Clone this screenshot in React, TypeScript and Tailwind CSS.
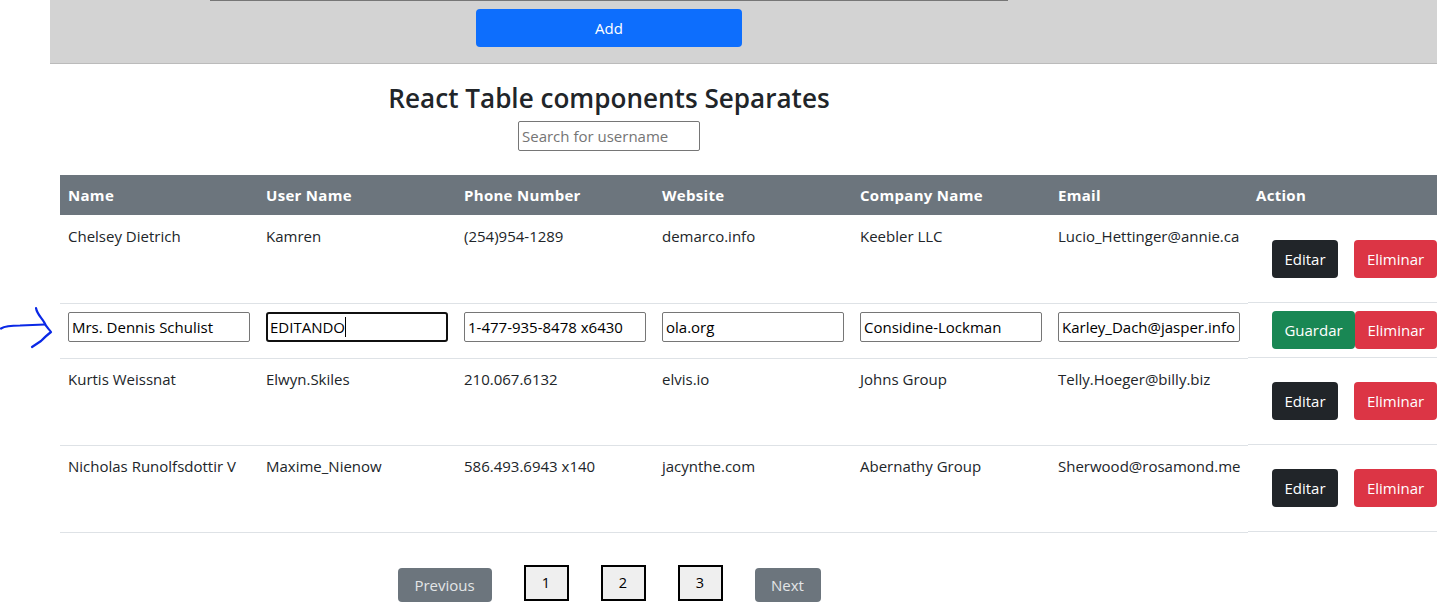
const rows = [
  { name: "Chelsey Dietrich", user: "Kamren", phone: "(254)954-1289", site: "demarco.info", company: "Keebler LLC", email: "Lucio_Hettinger@annie.ca" },
  { name: "Kurtis Weissnat", user: "Elwyn.Skiles", phone: "210.067.6132", site: "elvis.io", company: "Johns Group", email: "Telly.Hoeger@billy.biz" },
  { name: "Nicholas Runolfsdottir V", user: "Maxime_Nienow", phone: "586.493.6943 x140", site: "jacynthe.com", company: "Abernathy Group", email: "Sherwood@rosamond.me" },
]

const headers = ["Name", "User Name", "Phone Number", "Website", "Company Name", "Email", "Action"]

const inputClass =
  "w-[182px] h-[30px] border border-[#767676] rounded-[2px] px-[3px] text-[15px] text-black bg-white outline-none"

function TextRow({ row, height, actionHeight, top, actionTop }: { row: (typeof rows)[number]; height: string; actionHeight: string; top: string; actionTop: string }) {
  const cells = [row.name, row.user, row.phone, row.site, row.company, row.email]
  return (
    <div className="flex items-start">
      <div className={`flex w-[1188px] border-b border-[#dee2e6] px-0 ${height} ${top}`}>
        {cells.map((c) => (
          <div key={c} className="w-[198px] shrink-0 px-2 leading-[22px] whitespace-nowrap">
            {c}
          </div>
        ))}
      </div>
      <div className={`flex w-[189px] shrink-0 border-b border-[#dee2e6] pl-6 gap-4 ${actionHeight} ${actionTop}`}>
        <button className="h-[38px] w-[66px] rounded bg-[#212529] text-white">Editar</button>
        <button className="h-[38px] w-[83px] rounded bg-[#dc3545] text-white">Eliminar</button>
      </div>
    </div>
  )
}

export default function App() {
  return (
    <div className="w-[1437px] h-[612px] overflow-hidden bg-white pl-[50px] text-[15px] text-[#212529] font-['Open_Sans','Noto_Sans',sans-serif]">
      <div className="h-[64px] bg-[#d3d3d3] border-b border-[#bbbbbb]">
        <div className="w-[1118px] flex flex-col items-center">
          <div className="h-px w-[798px] bg-[#767676]" />
          <button className="mt-2 h-[38px] w-[266px] rounded bg-[#0d6efd] text-white">Add</button>
        </div>
      </div>

      <div className="w-[1118px] flex flex-col items-center">
        <h2 className="mt-[15px] h-[41px] text-[26.1px] leading-[38px] font-semibold whitespace-nowrap">React Table components Separates</h2>
        <input
          readOnly
          placeholder="Search for username"
          className="mt-[1px] h-[30px] w-[182px] border border-[#767676] rounded-[2px] px-[3px] text-[15px] placeholder:text-[#757575] outline-none"
        />
      </div>

      <div className="ml-[10px] mt-[24px] w-[1386px]">
        <div className="flex h-[40px] items-center bg-[#6c757d] text-white font-bold">
          {headers.map((h) => (
            <div key={h} className="w-[198px] shrink-0 px-2 tracking-[0.3px]">
              {h}
            </div>
          ))}
        </div>

        <TextRow row={rows[0]} height="h-[89px]" top="pt-[10px]" actionHeight="h-[88px]" actionTop="pt-[25px]" />

        <div className="flex items-start">
          <div className="flex h-[55px] w-[1188px] border-b border-[#dee2e6] pt-2">
            <div className="w-[198px] shrink-0 px-2"><input readOnly value="Mrs. Dennis Schulist" className={inputClass} /></div>
            <div className="w-[198px] shrink-0 px-2">
              <div className="flex h-[30px] w-[182px] items-center border-2 border-[#101010] rounded-[3px] px-[2px] text-black">
                EDITANDO<span className="h-[20px] w-px bg-black" />
              </div>
            </div>
            <div className="w-[198px] shrink-0 px-2"><input readOnly value="1-477-935-8478 x6430" className={inputClass} /></div>
            <div className="w-[198px] shrink-0 px-2"><input readOnly value="ola.org" className={inputClass} /></div>
            <div className="w-[198px] shrink-0 px-2"><input readOnly value="Considine-Lockman" className={inputClass} /></div>
            <div className="w-[198px] shrink-0 px-2"><input readOnly value="Karley_Dach@jasper.info" className={inputClass} /></div>
          </div>
          <div className="flex h-[54px] w-[189px] shrink-0 border-b border-[#dee2e6] pl-6 pt-[7px]">
            <button className="h-[38px] w-[83px] rounded bg-[#198754] text-white">Guardar</button>
            <button className="h-[38px] w-[82px] rounded bg-[#dc3545] text-white">Eliminar</button>
          </div>
        </div>

        <TextRow row={rows[1]} height="h-[87px]" top="pt-[9px]" actionHeight="h-[86px]" actionTop="pt-[23px]" />
        <TextRow row={rows[2]} height="h-[87px]" top="pt-[9px]" actionHeight="h-[86px]" actionTop="pt-[23px]" />
      </div>

      <div className="w-[1118px] mt-[32px] flex justify-center items-start gap-8">
        <button className="mt-[3px] h-[34px] w-[94px] rounded bg-[#6c757d] text-[#e3e5e7]">Previous</button>
        {[1, 2, 3].map((n) => (
          <button key={n} className="h-[36px] w-[45px] border-2 border-black bg-[#efefef] text-[14.5px] text-black">
            {n}
          </button>
        ))}
        <button className="mt-[3px] h-[34px] w-[66px] rounded bg-[#6c757d] text-[#e3e5e7]">Next</button>
      </div>

      {/* hand drawn arrow on the screenshot */}
      <svg className="absolute left-0 top-[305px]" width="56" height="46" viewBox="0 0 56 46" fill="none">
        <path d="M1 23.5 C5 21 12 20.5 20 20.5 L45 19.5" stroke="#0a28e6" strokeWidth="2.2" strokeLinecap="round" />
        <path d="M36 3 C37 9 41 12 44 17 C46 22 49 24 51 27 C47 30 44 33 41 36 C38 38 35 40 32 42" stroke="#0a28e6" strokeWidth="2.2" strokeLinecap="round" strokeLinejoin="round" />
      </svg>
    </div>
  )
}
